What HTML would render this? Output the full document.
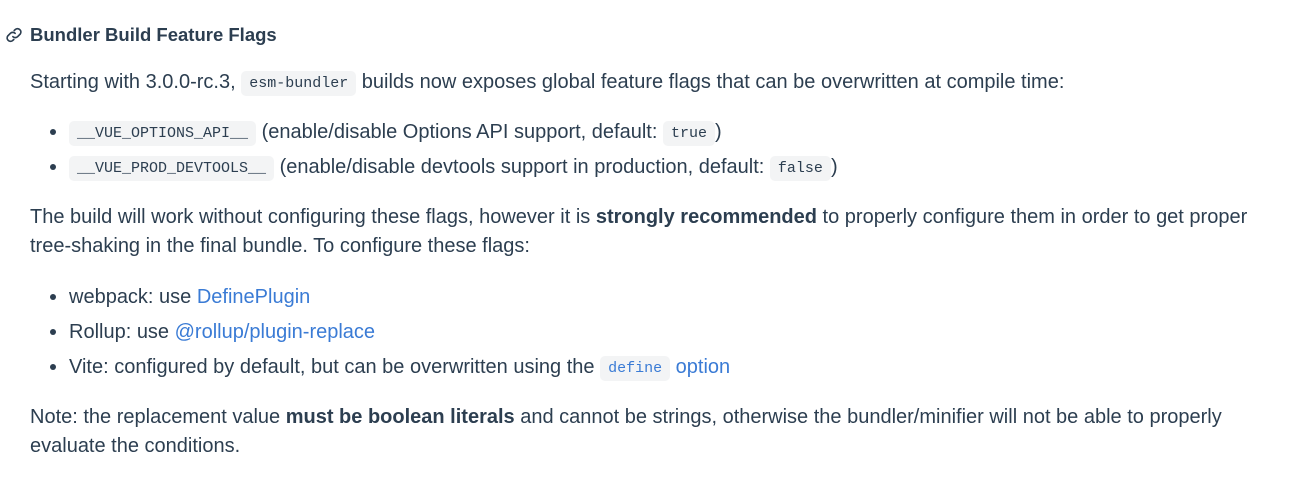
<!DOCTYPE html>
<html><head><meta charset="utf-8"><style>
body{margin:0;background:#fff;color:#2c3e50;font-family:"Liberation Sans",sans-serif;font-size:20px;}
.wrap{position:relative;width:1298px;height:478px;}
.l{position:absolute;white-space:nowrap;line-height:24px;}
code{font-family:"Liberation Mono",monospace;font-size:15px;background:#f3f4f5;border-radius:5px;padding:4px 8px;color:#2c3e50;position:relative;top:-1px;}
a{color:#3a7bd5;text-decoration:none;}
a code{color:#3a7bd5;}
b{font-weight:bold;}
.dot{position:absolute;width:6px;height:6px;border-radius:50%;background:#2c3e50;left:50px;}
</style></head><body><div class="wrap">
<svg style="position:absolute;left:5px;top:26px" width="18" height="18" viewBox="0 0 16 16" fill="none" stroke="#2c3e50" stroke-width="1.5" stroke-linecap="round"><path d="M7 9.5a3 3 0 0 0 4.2 0l2.3-2.3a3 3 0 0 0-4.2-4.2L8.2 4"/><path d="M9 6.5a3 3 0 0 0-4.2 0L2.5 8.8A3 3 0 0 0 6.7 13l1.1-1"/></svg>
<div class="l" style="left:30px;top:23px;font-weight:bold;font-size:18.5px">Bundler Build Feature Flags</div>
<div class="l" style="left:30px;top:70px">Starting with 3.0.0-rc.3, <code>esm-bundler</code> builds now exposes global feature flags that can be overwritten at compile time:</div>
<div class="dot" style="top:129px"></div>
<div class="l" style="left:69px;top:120px"><code>__VUE_OPTIONS_API__</code> (enable/disable Options API support, default: <code>true</code>)</div>
<div class="dot" style="top:164px"></div>
<div class="l" style="left:69px;top:155px"><code>__VUE_PROD_DEVTOOLS__</code> (enable/disable devtools support in production, default: <code>false</code>)</div>
<div class="l" style="left:30px;top:205px">The build will work without configuring these flags, however it is <b>strongly recommended</b> to properly configure them in order to get proper</div>
<div class="l" style="left:30px;top:234px">tree-shaking in the final bundle. To configure these flags:</div>
<div class="dot" style="top:294px"></div>
<div class="l" style="left:69px;top:285px">webpack: use <a>DefinePlugin</a></div>
<div class="dot" style="top:329px"></div>
<div class="l" style="left:69px;top:320px">Rollup: use <a>@rollup/plugin-replace</a></div>
<div class="dot" style="top:364px"></div>
<div class="l" style="left:69px;top:355px">Vite: configured by default, but can be overwritten using the <a><code>define</code> option</a></div>
<div class="l" style="left:30px;top:405px">Note: the replacement value <b>must be boolean literals</b> and cannot be strings, otherwise the bundler/minifier will not be able to properly</div>
<div class="l" style="left:30px;top:434px">evaluate the conditions.</div>
</div></body></html>
